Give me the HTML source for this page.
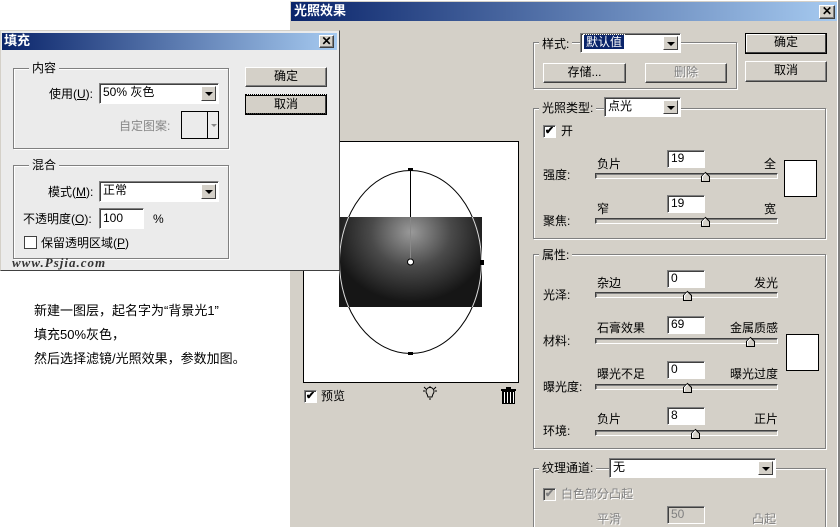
<!DOCTYPE html>
<html style="width:840px;height:527px;overflow:hidden"><head><meta charset="utf-8"><style>
*{margin:0;padding:0;box-sizing:border-box}
body{width:840px;height:527px;background:#fff;position:relative;overflow:hidden;font-family:"Liberation Sans","Noto Sans CJK SC","WenQuanYi Zen Hei",sans-serif;font-size:12px;color:#000}
.a{position:absolute}
.t{position:absolute;white-space:nowrap;font-size:12px;line-height:14px}
.grp{position:absolute;border:1px solid #808080;box-shadow:1px 1px 0 #fff, inset 1px 1px 0 #fff}
.lab{position:absolute;background:inherit;padding:0 3px;white-space:nowrap;line-height:14px}
.btn{position:absolute;background:#d4d0c8;border:1px solid;border-color:#fff #404040 #404040 #fff;box-shadow:inset -1px -1px 0 #808080;text-align:center;line-height:17px}
.sel{position:absolute;background:#fff;border:1px solid;border-color:#808080 #fff #fff #808080;box-shadow:inset 1px 1px 0 #404040;padding-left:3px;line-height:16px}
.arr{position:absolute;right:2px;top:2px;width:15px;bottom:2px;background:#d4d0c8;border:1px solid;border-color:#fff #404040 #404040 #fff}
.arr:after{content:"";position:absolute;left:3px;top:5px;border:4px solid transparent;border-top:4px solid #000;border-bottom:0}
.inp{position:absolute;background:#fff;border:1px solid;border-color:#808080 #fff #fff #808080;box-shadow:inset 1px 1px 0 #404040;padding-left:3px;line-height:15px;font-size:12px}
.sl{position:absolute;height:6px;border:1px solid;border-color:#404040 #fff #fff #404040;background:#d4d0c8;box-shadow:inset 1px 1px 0 #808080}
.cb{position:absolute;width:13px;height:13px;background:#fff;border:1px solid;border-color:#808080 #fff #fff #808080;box-shadow:inset 1px 1px 0 #404040}
</style></head><body>

<div class="a" style="left:289px;top:0;width:551px;height:527px;background:#d4d0c8;border-left:1px solid #fff;border-top:1px solid #fff"></div>
<div class="a" style="left:837px;top:0;width:3px;height:527px;background:#808080;border-left:1px solid #fff"></div>
<div class="a" style="left:291px;top:2px;width:546px;height:19px;background:linear-gradient(90deg,#0a246a,#a6caf0)"></div>
<div class="t" style="left:294px;top:4px;color:#fff;font-weight:bold;font-size:13px">光照效果</div>
<div class="btn" style="left:819px;top:5px;width:16px;height:14px;line-height:11px;font-weight:bold;font-size:12px">✕</div>

<div class="grp" style="left:533px;top:42px;width:204px;height:47px"></div>
<div class="lab" style="left:539px;top:37px;background:#d4d0c8">样式:</div>
<div class="sel" style="left:580px;top:33px;width:101px;height:20px"><span style="background:#0a246a;color:#fff;padding:0 2px;outline:1px dotted #fff">默认值</span><div class="arr"></div></div>
<div class="btn" style="left:543px;top:63px;width:83px;height:20px">存储...</div>
<div class="btn" style="left:645px;top:63px;width:82px;height:20px;color:#808080;text-shadow:1px 1px 0 #fff">删除</div>
<div class="btn" style="left:745px;top:33px;width:82px;height:21px;border:1px solid #000;box-shadow:inset -1px -1px 0 #404040,inset 1px 1px 0 #fff">确定</div>
<div class="btn" style="left:745px;top:61px;width:82px;height:21px">取消</div>

<div class="grp" style="left:533px;top:108px;width:293px;height:131px"></div>
<div class="lab" style="left:539px;top:101px;background:#d4d0c8">光照类型:</div>
<div class="sel" style="left:604px;top:97px;width:77px;height:20px">点光<div class="arr"></div></div>
<div class="cb" style="left:543px;top:125px;font-size:11px;line-height:10px;text-align:center;font-weight:bold">✔</div>
<div class="t" style="left:561px;top:124px">开</div>
<div class="t" style="left:543px;top:168px">强度:</div>
<div class="t" style="left:597px;top:157px">负片</div>
<div class="inp" style="left:667px;top:150px;width:38px;height:18px">19</div>
<div class="t" style="left:764px;top:157px">全</div>
<div class="sl" style="left:595px;top:173px;width:183px"></div>
<div class="a" style="left:784px;top:160px;width:33px;height:37px;background:#fff;border:1px solid #000"></div>
<div class="t" style="left:543px;top:214px">聚焦:</div>
<div class="t" style="left:597px;top:202px">窄</div>
<div class="inp" style="left:667px;top:195px;width:38px;height:18px">19</div>
<div class="t" style="left:764px;top:202px">宽</div>
<div class="sl" style="left:595px;top:218px;width:183px"></div>

<div class="grp" style="left:533px;top:254px;width:293px;height:195px"></div>
<div class="lab" style="left:539px;top:248px;background:#d4d0c8">属性:</div>
<div class="t" style="left:543px;top:288px">光泽:</div>
<div class="t" style="left:597px;top:276px">杂边</div>
<div class="inp" style="left:667px;top:270px;width:38px;height:18px">0</div>
<div class="t" style="left:754px;top:276px">发光</div>
<div class="sl" style="left:595px;top:292px;width:183px"></div>
<div class="t" style="left:543px;top:334px">材料:</div>
<div class="t" style="left:597px;top:321px">石膏效果</div>
<div class="inp" style="left:667px;top:316px;width:38px;height:18px">69</div>
<div class="t" style="left:730px;top:321px">金属质感</div>
<div class="sl" style="left:595px;top:338px;width:183px"></div>
<div class="a" style="left:786px;top:334px;width:33px;height:37px;background:#fff;border:1px solid #000"></div>
<div class="t" style="left:543px;top:380px">曝光度:</div>
<div class="t" style="left:597px;top:367px">曝光不足</div>
<div class="inp" style="left:667px;top:361px;width:38px;height:18px">0</div>
<div class="t" style="left:730px;top:367px">曝光过度</div>
<div class="sl" style="left:595px;top:384px;width:183px"></div>
<div class="t" style="left:543px;top:424px">环境:</div>
<div class="t" style="left:597px;top:412px">负片</div>
<div class="inp" style="left:667px;top:407px;width:38px;height:18px">8</div>
<div class="t" style="left:754px;top:412px">正片</div>
<div class="sl" style="left:595px;top:430px;width:183px"></div>

<div class="grp" style="left:533px;top:468px;width:293px;height:62px"></div>
<div class="lab" style="left:539px;top:461px;background:#d4d0c8">纹理通道:</div>
<div class="sel" style="left:609px;top:458px;width:167px;height:20px">无<div class="arr"></div></div>
<div class="cb" style="left:543px;top:488px;background:#d4d0c8;color:#808080;font-size:11px;line-height:10px;text-align:center;font-weight:bold">✔</div>
<div class="t" style="left:561px;top:487px;color:#808080;text-shadow:1px 1px 0 #fff">白色部分凸起</div>
<div class="t" style="left:597px;top:512px;color:#808080;text-shadow:1px 1px 0 #fff">平滑</div>
<div class="inp" style="left:667px;top:506px;width:38px;height:18px;background:#d4d0c8;color:#808080">50</div>
<div class="t" style="left:752px;top:512px;color:#808080;text-shadow:1px 1px 0 #fff">凸起</div>

<svg class="a" style="left:0;top:0" width="840" height="527">
<defs><g id="th"><path d="M-4,9 L-4,4 L0,0 L4,4 L4,9 Z" fill="#d4d0c8" stroke="#000" stroke-width="1"/><path d="M-3,8 L-3,4 L0,1" fill="none" stroke="#fff"/></g></defs>
<use href="#th" x="705.5" y="172.5"/><use href="#th" x="705.5" y="217.5"/>
<use href="#th" x="687.5" y="291.5"/><use href="#th" x="750.5" y="337.5"/>
<use href="#th" x="687.5" y="383.5"/><use href="#th" x="695.5" y="429.5"/>
</svg>

<div class="a" style="left:303px;top:141px;width:216px;height:242px;background:#fff;border:1px solid #000"></div>
<div class="a" style="left:339px;top:217px;width:143px;height:90px;background:radial-gradient(ellipse 80px 70px at 72px 15px,#9a9a9a,#4a4a4a 50%,#161616 100%)"></div>
<svg class="a" style="left:0;top:0" width="840" height="527">
<defs><clipPath id="r"><rect x="339" y="217" width="143" height="90"/></clipPath></defs>
<ellipse cx="410.5" cy="262" rx="71" ry="91.5" fill="none" stroke="#000" stroke-width="1"/>
<ellipse cx="410.5" cy="262" rx="71" ry="91.5" fill="none" stroke="#ddd" stroke-width="1" clip-path="url(#r)"/>
<line x1="410.5" y1="171" x2="410.5" y2="217" stroke="#000"/>
<line x1="410.5" y1="217" x2="410.5" y2="262" stroke="#888"/>
<circle cx="410.5" cy="262" r="3" fill="#fff" stroke="#000"/>
<rect x="408" y="168" width="5" height="3" fill="#000"/><rect x="408" y="352" width="5" height="3" fill="#000"/>
<rect x="480" y="260" width="4" height="5" fill="#000"/>
<g stroke="#000" fill="none" stroke-width="1">
<path d="M427,394 a4,4 0 1,1 6,0 l-1,3 h-4 z"/><line x1="429" y1="399" x2="431" y2="399"/>
<line x1="430" y1="386" x2="430" y2="388"/><line x1="423" y1="391" x2="425" y2="391"/><line x1="435" y1="391" x2="437" y2="391"/>
<line x1="424" y1="387" x2="426" y2="389"/><line x1="436" y1="387" x2="434" y2="389"/>
</g>
<g fill="#000"><rect x="501" y="389" width="15" height="2"/><rect x="506" y="387" width="5" height="2"/>
<rect x="502" y="391" width="13" height="13"/>
<rect x="504" y="392" width="1" height="11" fill="#fff"/><rect x="507" y="392" width="1" height="11" fill="#fff"/><rect x="510" y="392" width="1" height="11" fill="#fff"/><rect x="513" y="392" width="1" height="11" fill="#fff"/></g>
</svg>
<div class="cb" style="left:304px;top:390px;font-size:11px;line-height:10px;text-align:center;font-weight:bold">✔</div>
<div class="t" style="left:321px;top:389px">预览</div>

<div class="a" style="left:0;top:30px;width:340px;height:241px;background:#ebebeb;border:1px solid #d4d0c8;border-right-color:#404040;border-bottom-color:#404040"></div>
<div class="a" style="left:2px;top:33px;width:335px;height:17px;background:linear-gradient(90deg,#0a246a,#a6caf0)"></div>
<div class="t" style="left:4px;top:34px;color:#fff;font-weight:bold;font-size:13px">填充</div>
<div class="btn" style="left:319px;top:35px;width:15px;height:13px;line-height:10px;font-weight:bold;font-size:12px">✕</div>

<div class="grp" style="left:13px;top:68px;width:216px;height:81px"></div>
<div class="lab" style="left:29px;top:61px;background:#ebebeb">内容</div>
<div class="t" style="left:49px;top:87px">使用(<u>U</u>):</div>
<div class="sel" style="left:99px;top:83px;width:120px;height:21px">50% 灰色<div class="arr"></div></div>
<div class="t" style="left:119px;top:119px;color:#888">自定图案:</div>
<div class="a" style="left:181px;top:111px;width:38px;height:28px;border:1px solid #000;background:#ebebeb"><div class="a" style="left:25px;top:0;height:26px;border-left:1px solid #000"></div><div class="a" style="left:29px;top:12px;border:3px solid transparent;border-top:3px solid #888"></div></div>

<div class="grp" style="left:13px;top:165px;width:216px;height:94px"></div>
<div class="lab" style="left:29px;top:158px;background:#ebebeb">混合</div>
<div class="t" style="left:48px;top:185px">模式(<u>M</u>):</div>
<div class="sel" style="left:99px;top:181px;width:120px;height:21px">正常<div class="arr"></div></div>
<div class="t" style="left:23px;top:212px">不透明度(<u>O</u>):</div>
<div class="inp" style="left:99px;top:208px;width:45px;height:21px;line-height:18px">100</div>
<div class="t" style="left:153px;top:212px">%</div>
<div class="cb" style="left:24px;top:236px;box-shadow:none;border:1px solid #404040"></div>
<div class="t" style="left:41px;top:236px">保留透明区域(<u>P</u>)</div>
<div class="t" style="left:12px;top:256px;font-family:'Liberation Serif',serif;font-style:italic;font-weight:bold;font-size:13px;color:#333;letter-spacing:1px">www.Psjia.com</div>

<div class="btn" style="left:245px;top:67px;width:82px;height:20px">确定</div>
<div class="btn" style="left:245px;top:95px;width:82px;height:20px;border:1px solid #000;box-shadow:inset -1px -1px 0 #404040"><span style="outline:1px dotted #000;outline-offset:2px;padding:0 26px">取消</span></div>

<div class="t" style="left:34px;top:303px;font-size:13px;line-height:16px">新建一图层，起名字为“背景光1”</div>
<div class="t" style="left:34px;top:327px;font-size:13px;line-height:16px">填充50%灰色，</div>
<div class="t" style="left:34px;top:351px;font-size:13px;line-height:16px">然后选择滤镜/光照效果，参数加图。</div>
</body></html>
